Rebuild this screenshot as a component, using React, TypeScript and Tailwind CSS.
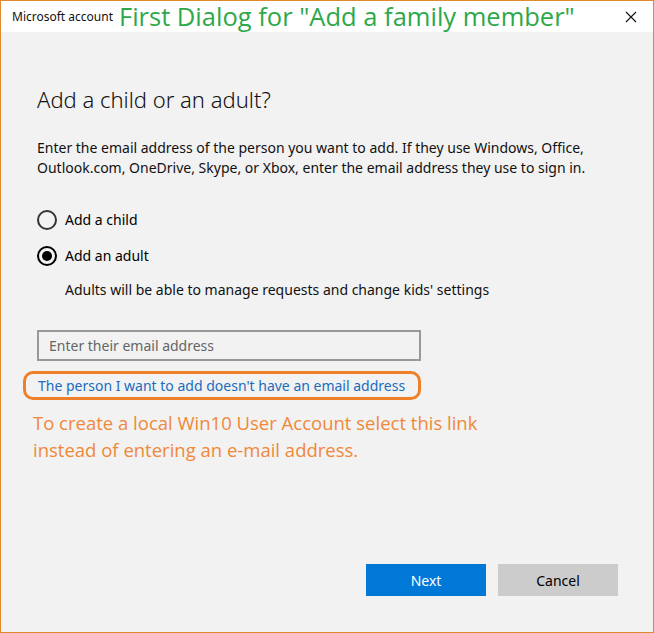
export default function App() {
  const ui = { fontFamily: '"Noto Sans", "Open Sans", sans-serif' };
  const note = { fontFamily: '"Open Sans", "Noto Sans", sans-serif' };

  return (
    <div className="w-[654px] h-[633px] border border-[#e0892f] bg-[#f2f2f2] flex flex-col text-[#000]" style={ui}>
      {/* title bar */}
      <div className="h-[31px] bg-white flex items-center pl-[11px] pr-[16px]">
        <span className="text-[12px] text-[#111]">Microsoft account</span>
        <span className="ml-[6px] text-[25.5px] leading-none text-[#2ea84a]" style={note}>
          First Dialog for "Add a family member"
        </span>
        <svg className="ml-auto" width="12" height="12" viewBox="0 0 12 12">
          <path d="M1 1 L11 11 M11 1 L1 11" stroke="#111" strokeWidth="1.1" />
        </svg>
      </div>

      {/* body */}
      <div className="flex-1 flex flex-col pl-[36px] pr-[36px]">
        <h1 className="mt-[53px] text-[22px] font-light leading-[28px] text-[#111]">Add a child or an adult?</h1>

        <p className="mt-[25px] text-[14px] leading-[20px] text-[#111]">
          Enter the email address of the person you want to add. If they use Windows, Office, Outlook.com, OneDrive, Skype, or Xbox, enter the email address they use to sign in.
        </p>

        <div className="mt-[32px] flex flex-col gap-[16px]">
          <label className="flex items-center gap-[8px] text-[14px] leading-[20px]">
            <span className="w-[20px] h-[20px] rounded-full border-2 border-[#333]" />
            Add a child
          </label>
          <label className="flex items-center gap-[8px] text-[14px] leading-[20px]">
            <span className="w-[20px] h-[20px] rounded-full border-2 border-[#000] flex items-center justify-center">
              <span className="w-[10px] h-[10px] rounded-full bg-[#000]" />
            </span>
            Add an adult
          </label>
        </div>

        <p className="mt-[14px] ml-[28px] text-[14px] leading-[20px] text-[#111]">
          Adults will be able to manage requests and change kids' settings
        </p>

        <div className="mt-[30px] w-[384px] h-[31px] border-2 border-[#999] bg-[#f2f2f2] flex items-center px-[10px]">
          <span className="text-[14px] text-[#666]">Enter their email address</span>
        </div>

        <div className="mt-[10px] -ml-[14px] w-[398px] h-[29px] border-[3px] border-[#f07f2a] rounded-[10px] flex items-center pl-[12px]">
          <span className="text-[14px] text-[#1a6cbf]">The person I want to add doesn't have an email address</span>
        </div>

        <p className="mt-[9px] -ml-[4px] text-[18.5px] leading-[27px] text-[#f0883a]" style={note}>
          To create a local Win10 User Account select this link
          <br />
          instead of entering an e-mail address.
        </p>

        <div className="mt-auto mb-[36px] flex justify-end gap-[12px] -mr-[1px]">
          <button className="w-[120px] h-[32px] bg-[#0078d7] text-white text-[14px]">Next</button>
          <button className="w-[120px] h-[32px] bg-[#cccccc] text-[#000] text-[14px]">Cancel</button>
        </div>
      </div>
    </div>
  );
}
